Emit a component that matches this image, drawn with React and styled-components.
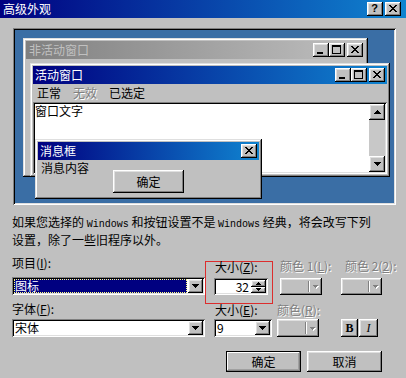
import React from 'react';
import styled, { createGlobalStyle, css } from 'styled-components';

const GlobalStyle = createGlobalStyle`
  html, body { margin: 0; padding: 0; background: #c0c0c0; }
  body {
    font-family: "Noto Sans CJK SC", "Noto Sans", sans-serif;
    font-size: 12px;
    color: #000;
  }
  #root { width: 406px; height: 378px; }
`;

const raised = css`
  box-shadow: inset -1px -1px #000, inset 1px 1px #fff, inset -2px -2px #808080, inset 2px 2px #dfdfdf;
`;
const sunken = css`
  box-shadow: inset 1px 1px #808080, inset -1px -1px #fff, inset 2px 2px #000, inset -2px -2px #dfdfdf;
`;

const Dialog = styled.div`
  width: 406px;
  height: 378px;
  background: #c0c0c0;
  display: flex;
  flex-direction: column;
  overflow: hidden;
  box-sizing: border-box;
`;

const TitleBar = styled.div`
  height: 18px;
  flex: none;
  display: flex;
  align-items: center;
  justify-content: space-between;
  padding: 0 5px 0 3px;
  background: linear-gradient(90deg, #000080, #1084d0);
  color: #fff;
`;

const TitleText = styled.span`
  font-size: 12px;
  line-height: 18px;
  white-space: nowrap;
`;

const CapGroup = styled.div`
  display: flex;
  align-items: center;
`;

const CapButton = styled.div`
  width: 16px;
  height: 14px;
  box-sizing: border-box;
  background: #c0c0c0;
  ${raised};
  margin-left: ${p => p.$ml || 0}px;
  display: flex;
  justify-content: ${p => (p.$min ? 'flex-start' : 'center')};
  align-items: ${p => (p.$min ? 'flex-end' : 'center')};
  padding: ${p => (p.$min ? '0 0 3px 4px' : '0 1px 1px 0')};
  color: #000;
`;

const HelpGlyph = styled.span`
  font-family: "Liberation Sans", Arial, sans-serif;
  font-weight: bold;
  font-size: 11px;
  line-height: 11px;
`;

const Svg = styled.svg`
  display: block;
  flex: none;
`;

const CloseIcon = () => (
  <Svg width="8" height="7" viewBox="0 0 8 7" shapeRendering="crispEdges">
    <path fill="#000" d="M0 0h2v1H0zM6 0h2v1H6zM1 1h2v1H1zM5 1h2v1H5zM2 2h4v1H2zM3 3h2v1H3zM2 4h4v1H2zM1 5h2v1H1zM5 5h2v1H5zM0 6h2v1H0zM6 6h2v1H6z" />
  </Svg>
);
const MaxIcon = () => (
  <Svg width="9" height="9" viewBox="0 0 9 9" shapeRendering="crispEdges">
    <path fill="#000" d="M0 0h9v2H0zM0 2h1v7H0zM8 2h1v7H8zM1 8h7v1H1z" />
  </Svg>
);
const MinIcon = () => (
  <Svg width="6" height="2" viewBox="0 0 6 2" shapeRendering="crispEdges">
    <path fill="#000" d="M0 0h6v2H0z" />
  </Svg>
);

const Tri = ({ dir = 'down', w = 7, color = '#000' }) => {
  const h = Math.ceil(w / 2);
  const pts = dir === 'down' ? `0,0 ${w},0 ${w / 2},${h}` : `0,${h} ${w},${h} ${w / 2},0`;
  return (
    <Svg width={w} height={h} viewBox={`0 0 ${w} ${h}`} shapeRendering="crispEdges">
      <polygon points={pts} fill={color} />
    </Svg>
  );
};

const Preview = styled.div`
  position: relative;
  flex: none;
  margin: 10px 10px 0 13px;
  height: 177px;
  background: #3a6ea5;
  ${sunken};
`;

const Win = styled.div`
  position: absolute;
  left: ${p => p.$x}px;
  top: ${p => p.$y}px;
  width: ${p => p.$w}px;
  height: ${p => p.$h}px;
  box-sizing: border-box;
  padding: 3px;
  background: #c0c0c0;
  display: flex;
  flex-direction: column;
  box-shadow: inset -1px -1px #000, inset 1px 1px #dfdfdf, inset -2px -2px #808080, inset 2px 2px #fff;
`;

const Caption = styled.div`
  height: 18px;
  flex: none;
  display: flex;
  align-items: center;
  justify-content: space-between;
  padding: 0 2px 0 ${p => p.$pl ?? 3}px;
  background: ${p =>
    p.$active ? 'linear-gradient(90deg, #000080, #1084d0)' : 'linear-gradient(90deg, #808080, #c0c0c0)'};
  color: ${p => (p.$active ? '#fff' : '#c0c0c0')};
`;

const CaptionText = styled.span`
  line-height: 18px;
  white-space: nowrap;
`;

const MenuBar = styled.div`
  height: 18px;
  flex: none;
  display: flex;
  align-items: center;
  gap: 12px;
  padding-left: 4px;
`;

const MenuItem = styled.span`
  line-height: 18px;
  white-space: nowrap;
  color: ${p => (p.$disabled ? '#808080' : '#000')};
  text-shadow: ${p => (p.$disabled ? '1px 1px 0 #fff' : 'none')};
`;

const Client = styled.div`
  flex: 1;
  display: flex;
  padding: 2px;
  background: #fff;
  ${sunken};
`;

const ClientText = styled.div`
  flex: 1;
  line-height: 14px;
`;

const ScrollBar = styled.div`
  width: 16px;
  flex: none;
  display: flex;
  flex-direction: column;
`;

const ScrollBtn = styled.div`
  width: 16px;
  height: 16px;
  flex: none;
  box-sizing: border-box;
  background: #c0c0c0;
  ${raised};
  display: flex;
  align-items: center;
  justify-content: center;
`;

const ScrollTrack = styled.div`
  flex: 1;
  background: #c8c8c8;
`;

const MsgBody = styled.div`
  flex: 1;
  display: flex;
  align-items: flex-start;
  padding-left: 3px;
`;

const MsgText = styled.span`
  line-height: 14px;
  margin-top: 1px;
  white-space: nowrap;
`;

const PushButton = styled.div`
  width: ${p => p.$w}px;
  height: ${p => p.$h}px;
  margin: ${p => p.$mt || 0}px 0 0 ${p => p.$ml || 0}px;
  flex: none;
  box-sizing: border-box;
  display: flex;
  align-items: center;
  justify-content: center;
  background: #c0c0c0;
  white-space: nowrap;
  ${p =>
    p.$default
      ? css`
          border: 1px solid #000;
          box-shadow: inset -1px -1px #808080, inset 1px 1px #fff, inset -2px -2px #a0a0a0;
        `
      : raised};
`;

const Note = styled.p`
  margin: 9px 0 0 12px;
  line-height: 15px;
  white-space: nowrap;
  flex: none;
`;

const Latin = styled.span`
  font-family: "Liberation Mono", "DejaVu Sans Mono", monospace;
  font-size: 10px;
`;

const FormRow = styled.div`
  display: flex;
  align-items: flex-start;
  flex: none;
  height: ${p => p.$h}px;
  margin-top: ${p => p.$mt || 0}px;
  padding-left: 12px;
`;

const Field = styled.div`
  display: flex;
  flex-direction: column;
  flex: none;
  width: ${p => p.$w}px;
  margin-left: ${p => p.$ml || 0}px;
  margin-top: ${p => p.$mt || 0}px;
`;

const Label = styled.span`
  line-height: ${p => p.$lh || 14}px;
  padding-left: ${p => p.$pl || 0}px;
  white-space: nowrap;
  color: ${p => (p.$disabled ? '#808080' : '#000')};
  text-shadow: ${p => (p.$disabled ? '1px 1px 0 #fff' : 'none')};
  u { text-decoration: underline; text-underline-offset: 1px; }
`;

const Combo = styled.div`
  width: ${p => p.$w}px;
  height: 18px;
  margin-top: ${p => p.$mt || 0}px;
  box-sizing: border-box;
  padding: 2px;
  display: flex;
  background: #fff;
  ${sunken};
`;

const ComboText = styled.div`
  flex: 1;
  line-height: 14px;
  padding-left: 1px;
  margin-right: 1px;
  white-space: nowrap;
  background: ${p => (p.$selected ? '#000080' : 'transparent')};
  color: ${p => (p.$selected ? '#fff' : '#000')};
  outline: ${p => (p.$selected ? '1px dotted #ffff80' : 'none')};
  outline-offset: -1px;
`;

const DropBtn = styled.div`
  width: 15px;
  height: 14px;
  flex: none;
  box-sizing: border-box;
  background: #c0c0c0;
  ${raised};
  display: flex;
  align-items: center;
  justify-content: center;
`;

const Highlight = styled.div`
  width: 68px;
  height: 43px;
  flex: none;
  margin-top: 5px;
  box-sizing: border-box;
  border: 1px solid #dc2d2d;
  padding-left: 8px;
  display: flex;
  flex-direction: column;
`;

const Spinner = styled.div`
  width: 54px;
  height: 17px;
  margin-top: 6px;
  box-sizing: border-box;
  padding: 2px;
  display: flex;
  background: #fff;
  ${sunken};
`;

const SpinText = styled.div`
  flex: 1;
  text-align: right;
  line-height: 13px;
  padding-right: 2px;
`;

const SpinBtns = styled.div`
  width: 15px;
  display: flex;
  flex-direction: column;
  flex: none;
`;

const SpinBtn = styled.div`
  flex: 1;
  box-sizing: border-box;
  background: #c0c0c0;
  ${raised};
  display: flex;
  align-items: center;
  justify-content: center;
`;

const ColorBtn = styled.div`
  width: ${p => p.$w}px;
  height: ${p => p.$h}px;
  margin-top: ${p => p.$mt || 0}px;
  box-sizing: border-box;
  background: #c0c0c0;
  ${raised};
  display: flex;
  align-items: center;
  justify-content: flex-end;
  padding-right: 3px;
`;

const Sep = styled.div`
  width: 1px;
  height: ${p => p.$h - 6}px;
  background: #808080;
  border-right: 1px solid #fff;
  margin-right: 2px;
`;

const DisArrow = styled.div`
  width: 7px;
  display: flex;
  justify-content: center;
  filter: drop-shadow(1px 1px 0 #fff);
`;

const ColorPicker = ({ w, h, mt }) => (
  <ColorBtn $w={w} $h={h} $mt={mt}>
    <Sep $h={h} />
    <DisArrow><Tri w={5} color="#808080" /></DisArrow>
  </ColorBtn>
);

const StyleGroup = styled.div`
  display: flex;
  flex: none;
  margin-left: ${p => p.$ml}px;
  margin-top: ${p => p.$mt}px;
  gap: 1px;
`;

const StyleBtn = styled.div`
  width: ${p => p.$w}px;
  height: 18px;
  box-sizing: border-box;
  background: #c0c0c0;
  ${raised};
  display: flex;
  align-items: center;
  justify-content: center;
  font-family: "Liberation Serif", "Times New Roman", serif;
  font-size: 12px;
  font-weight: ${p => (p.$bold ? 'bold' : 'normal')};
  font-style: ${p => (p.$italic ? 'italic' : 'normal')};
`;

const ButtonRow = styled.div`
  display: flex;
  justify-content: flex-end;
  gap: 6px;
  flex: none;
  margin-top: 14px;
  padding-right: 24px;
`;

export default function App() {
  return (
    <>
      <GlobalStyle />
      <Dialog>
        <TitleBar>
          <TitleText>高级外观</TitleText>
          <CapGroup>
            <CapButton><HelpGlyph>?</HelpGlyph></CapButton>
            <CapButton $ml={2}><CloseIcon /></CapButton>
          </CapGroup>
        </TitleBar>

        <Preview>
          <Win $x={10} $y={10} $w={345} $h={139}>
            <Caption>
              <CaptionText>非活动窗口</CaptionText>
              <CapGroup>
                <CapButton $min><MinIcon /></CapButton>
                <CapButton><MaxIcon /></CapButton>
                <CapButton $ml={2}><CloseIcon /></CapButton>
              </CapGroup>
            </Caption>
          </Win>

          <Win $x={17} $y={35} $w={360} $h={114}>
            <Caption $active $pl={2}>
              <CaptionText>活动窗口</CaptionText>
              <CapGroup>
                <CapButton $min><MinIcon /></CapButton>
                <CapButton><MaxIcon /></CapButton>
                <CapButton $ml={2}><CloseIcon /></CapButton>
              </CapGroup>
            </Caption>
            <MenuBar>
              <MenuItem>正常</MenuItem>
              <MenuItem $disabled>无效</MenuItem>
              <MenuItem>已选定</MenuItem>
            </MenuBar>
            <Client>
              <ClientText>窗口文字</ClientText>
              <ScrollBar>
                <ScrollBtn><Tri dir="up" /></ScrollBtn>
                <ScrollTrack />
                <ScrollBtn><Tri /></ScrollBtn>
              </ScrollBar>
            </Client>
          </Win>

          <Win $x={22} $y={111} $w={227} $h={60}>
            <Caption $active $pl={2}>
              <CaptionText>消息框</CaptionText>
              <CapGroup>
                <CapButton><CloseIcon /></CapButton>
              </CapGroup>
            </Caption>
            <MsgBody>
              <MsgText>消息内容</MsgText>
              <PushButton $w={71} $h={23} $ml={24} $mt={10}>确定</PushButton>
            </MsgBody>
          </Win>
        </Preview>

        <Note>
          如果您选择的 <Latin>Windows</Latin> 和按钮设置不是 <Latin>Windows</Latin> 经典，将会改写下列
          <br />
          设置，除了一些旧程序以外。
        </Note>

        <FormRow $h={46} $mt={9}>
          <Field $w={193}>
            <Label>项目(<u>I</u>):</Label>
            <Combo $w={193} $mt={7}>
              <ComboText $selected>图标</ComboText>
              <DropBtn><Tri /></DropBtn>
            </Combo>
          </Field>
          <Highlight>
            <Label $lh={10} $pl={1}>大小(<u>Z</u>):</Label>
            <Spinner>
              <SpinText>32</SpinText>
              <SpinBtns>
                <SpinBtn><Tri dir="up" w={5} /></SpinBtn>
                <SpinBtn><Tri w={5} /></SpinBtn>
              </SpinBtns>
            </Spinner>
          </Highlight>
          <Field $w={42} $ml={7} $mt={4}>
            <Label $disabled $lh={12}>颜色 1(<u>L</u>):</Label>
            <ColorPicker w={42} h={17} mt={6} />
          </Field>
          <Field $w={41} $ml={19} $mt={4}>
            <Label $disabled $lh={12} $pl={4}>颜色 2(<u>2</u>):</Label>
            <ColorPicker w={41} h={17} mt={6} />
          </Field>
        </FormRow>

        <FormRow $h={35}>
          <Field $w={193}>
            <Label>字体(<u>F</u>):</Label>
            <Combo $w={193} $mt={3}>
              <ComboText>宋体</ComboText>
              <DropBtn><Tri /></DropBtn>
            </Combo>
          </Field>
          <Field $w={58} $ml={9} $mt={1}>
            <Label $pl={1}>大小(<u>E</u>):</Label>
            <Combo $w={58} $mt={2}>
              <ComboText>9</ComboText>
              <DropBtn><Tri /></DropBtn>
            </Combo>
          </Field>
          <Field $w={42} $ml={5} $mt={1}>
            <Label $disabled>颜色(<u>R</u>):</Label>
            <ColorPicker w={42} h={18} mt={2} />
          </Field>
          <StyleGroup $ml={22} $mt={17}>
            <StyleBtn $w={17} $bold>B</StyleBtn>
            <StyleBtn $w={19} $italic>I</StyleBtn>
          </StyleGroup>
        </FormRow>

        <ButtonRow>
          <PushButton $w={75} $h={21} $default>确定</PushButton>
          <PushButton $w={75} $h={21}>取消</PushButton>
        </ButtonRow>
      </Dialog>
    </>
  );
}
